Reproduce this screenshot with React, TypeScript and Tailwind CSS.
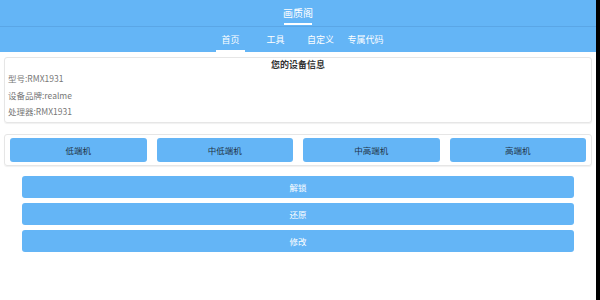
const tabs = ['首页', '工具', '自定义', '专属代码']
const tiers = ['低端机', '中低端机', '中高端机', '高端机']
const actions = ['解锁', '还原', '修改']

export default function App() {
  return (
    <div
      className="flex h-[300px] w-[600px] bg-white"
      style={{ fontFamily: '"Noto Sans CJK SC", "Noto Sans", sans-serif' }}
    >
      <div className="flex w-[596px] flex-col">
        {/* Header */}
        <div className="bg-[#64b5f6]">
          <div className="flex h-[27px] flex-col items-center justify-end border-b border-[#5aa6e6] pb-[1px]">
            <span className="text-[10px] leading-[14px] text-white">画质阁</span>
            <div className="mt-[3px] h-[2px] w-[28px] bg-white" />
          </div>
          <div className="flex h-[25px] justify-center">
            {tabs.map((t, i) => (
              <div key={t} className="flex w-[45px] flex-col items-center justify-end">
                <span className="text-[9px] leading-[12px] text-white">{t}</span>
                <div className={`mt-[4px] h-[2px] w-[29px] ${i === 0 ? 'bg-white' : 'bg-transparent'}`} />
              </div>
            ))}
          </div>
        </div>

        {/* Device info */}
        <div className="mx-[4px] mt-[5px] h-[66px] rounded-[3px] border border-[#e6e6e6] px-[3px] pt-[1px] shadow-[0_1px_1px_rgba(0,0,0,0.06)]">
          <div className="text-center text-[9px] font-bold leading-[12px] text-[#333]">您的设备信息</div>
          <div className="mt-[1px] flex flex-col gap-[4px] text-[8.5px] leading-[12.5px] text-[#777]">
            <span>型号:RMX1931</span>
            <span>设备品牌:realme</span>
            <span>处理器:RMX1931</span>
          </div>
        </div>

        {/* Tier buttons */}
        <div className="mx-[4px] mt-[11px] grid grid-cols-4 gap-[10px] rounded-[3px] border border-[#e6e6e6] px-[5px] py-[3px] shadow-[0_1px_1px_rgba(0,0,0,0.06)]">
          {tiers.map((t) => (
            <div
              key={t}
              className="flex h-[24px] items-center justify-center rounded-[3px] bg-[#64b5f6] text-[8.5px] text-[#1f3447]"
            >
              {t}
            </div>
          ))}
        </div>

        {/* Actions */}
        <div className="mx-[22px] mt-[10px] flex flex-col gap-[5px]">
          {actions.map((a) => (
            <div
              key={a}
              className="flex h-[22px] items-center justify-center rounded-[3px] bg-[#64b5f6] text-[8.5px] text-white"
            >
              {a}
            </div>
          ))}
        </div>
      </div>
      <div className="w-[4px] bg-black" />
    </div>
  )
}
